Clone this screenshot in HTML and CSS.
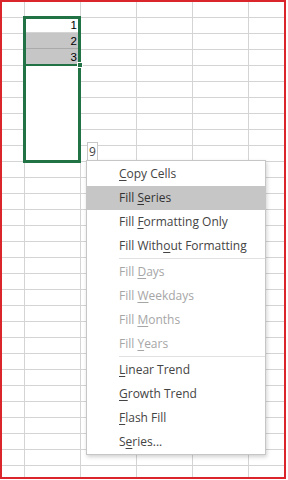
FILE: index.html
```html
<!DOCTYPE html>
<html lang="en">
<head>
  <meta charset="UTF-8">
  <title>Auto Fill Options</title>
  <link rel="stylesheet" href="styles.css">
</head>
<body>

<div class="sheet">

  <!-- dragged fill range -->
  <div class="fill-range">
    <div class="cell">1</div>
    <div class="cell picked">2</div>
    <div class="cell picked last">3</div>
    <span class="handle"></span>
  </div>

  <div class="tip">9</div>

  <!-- auto fill menu -->
  <div class="menu">
    <div class="item"><u>C</u>opy Cells</div>
    <div class="item active">Fill <u>S</u>eries</div>
    <div class="item">Fill <u>F</u>ormatting Only</div>
    <div class="item">Fill With<u>o</u>ut Formatting</div>
    <div class="sep"></div>
    <div class="item off">Fill <u>D</u>ays</div>
    <div class="item off">Fill <u>W</u>eekdays</div>
    <div class="item off">Fill <u>M</u>onths</div>
    <div class="item off">Fill <u>Y</u>ears</div>
    <div class="sep"></div>
    <div class="item"><u>L</u>inear Trend</div>
    <div class="item"><u>G</u>rowth Trend</div>
    <div class="item"><u>F</u>lash Fill</div>
    <div class="item">S<u>e</u>ries...</div>
  </div>

</div>

</body>
</html>
```
FILE: styles.css
```css
body {
  margin: 0;
  padding: 0;
  background-color: #fff;
  font-family: "Open Sans", "Noto Sans", sans-serif;
}

.sheet {
  position: relative;
  width: 286px;
  height: 479px;
  box-sizing: border-box;
  border: 2px solid #d9252b;
  border-right-width: 2px;
  background-color: #fff;
  background-image:
    linear-gradient(to right, transparent 55px, #d4d4d4 55px),
    linear-gradient(to bottom, transparent 15px, #d4d4d4 15px);
  background-size: 56px 100%, 100% 16px;
  background-position: 23px 0, 0 0;
  overflow: hidden;
}

/* selection box - sheet coords are offset by the 2px frame */
.fill-range {
  position: absolute;
  left: 21px;
  top: 14px;
  width: 58px;
  height: 147px;
  box-sizing: border-box;
  border: 3px solid #217346;
  background: #fff;
}

.cell {
  height: 16px;
  box-sizing: border-box;
  border-bottom: 1px solid #d4d4d4;
  padding-right: 1px;
  text-align: right;
  font-family: "Liberation Sans", Arial, sans-serif;
  font-size: 11.5px;
  line-height: 17px;
  color: #000;
}

.cell:first-child {
  height: 14px;
  line-height: 13px;
}

.cell.picked {
  background-color: #c6c6c6;
  border-bottom-color: #aaaaaa;
}

.cell.last {
  border-bottom: 2px solid #217346;
  height: 17px;
}

.handle {
  position: absolute;
  right: -5px;
  top: 43px;
  width: 6px;
  height: 6px;
  background: #217346;
  border: 1px solid #fff;
  box-sizing: border-box;
}

.tip {
  position: absolute;
  left: 85px;
  top: 140px;
  width: 11px;
  height: 19px;
  box-sizing: border-box;
  border: 1px solid #c8c8c8;
  background: #fff;
  font-size: 12px;
  line-height: 17px;
  padding-left: 1px;
  color: #444;
}

.menu {
  position: absolute;
  left: 84px;
  top: 158px;
  width: 180px;
  box-sizing: border-box;
  border: 1px solid #c6c6c6;
  background: #fff;
  padding: 1px 0 0 0;
  box-shadow: 1px 2px 4px rgba(0,0,0,0.18);
}

.item {
  height: 24px;
  line-height: 24px;
  padding-left: 32px;
  font-size: 12px;
  color: #444;
  white-space: nowrap;
}

.item u {
  text-underline-offset: 2px;
}

.item.active {
  background-color: #c6c6c6;
  color: #333;
}

.item.off {
  color: #a6a6a6;
}

.sep {
  height: 1px;
  margin: 0 0 1px 32px;
  background: #e1e1e1;
}
```
